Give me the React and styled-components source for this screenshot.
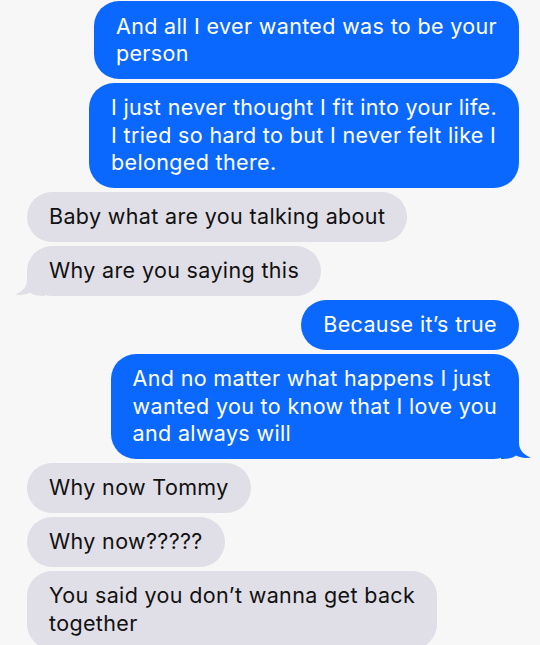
import React from 'react';
import styled, { createGlobalStyle } from 'styled-components';

const messages = [
  { out: true, lines: ['And all I ever wanted was to be your', 'person'] },
  {
    out: true,
    lines: [
      'I just never thought I fit into your life.',
      'I tried so hard to but I never felt like I',
      'belonged there.',
    ],
  },
  { out: false, lines: ['Baby what are you talking about'] },
  { out: false, tail: true, lines: ['Why are you saying this'] },
  { out: true, lines: ['Because it\u2019s true'] },
  {
    out: true,
    tail: true,
    lines: [
      'And no matter what happens I just',
      'wanted you to know that I love you',
      'and always will',
    ],
  },
  { out: false, lines: ['Why now Tommy'] },
  { out: false, lines: ['Why now?????'] },
  { out: false, lines: ['You said you don\u2019t wanna get back', 'together'] },
];

const BLUE = '#0b68ff';
const GRAY = '#e0dee6';

const GlobalStyle = createGlobalStyle`
  html, body {
    margin: 0;
    padding: 0;
    background: #f7f7f7;
    overflow: hidden;
  }
  body {
    font-family: Inter, "Noto Sans", sans-serif;
  }
`;

const Thread = styled.div`
  display: flex;
  flex-direction: column;
  gap: 3.5px;
  padding: 1px 21px 0 27px;
  width: 540px;
  height: 645px;
  box-sizing: border-box;
  overflow: hidden;
`;

const Bubble = styled.div`
  position: relative;
  align-self: ${(p) => (p.$out ? 'flex-end' : 'flex-start')};
  background: ${(p) => (p.$out ? BLUE : GRAY)};
  color: ${(p) => (p.$out ? '#ffffff' : '#111111')};
  border-radius: 25px;
  padding: 11.5px 22px;
  font-size: 21.5px;
  line-height: 27.5px;
  letter-spacing: 0.35px;
  white-space: nowrap;
`;

const Tail = styled.svg`
  position: absolute;
  bottom: 0;
  width: 30px;
  height: 30px;
  ${(p) => (p.$out ? 'right: -12px; transform: scaleX(-1);' : 'left: -12px;')}
`;

const BubbleTail = ({ out }) => (
  <Tail $out={out} viewBox="0 0 30 30">
    <path
      d="M12 3 L12 14 C12 21 7 26 0 28.5 C6 29.5 11 28.5 15 26.5 C18 29 23 30 30 30 L30 3 Z"
      fill={out ? BLUE : GRAY}
    />
  </Tail>
);

const Message = ({ msg }) => (
  <Bubble $out={msg.out}>
    {msg.lines.map((line, i) => (
      <React.Fragment key={i}>
        {i > 0 && <br />}
        {line}
      </React.Fragment>
    ))}
    {msg.tail ? <BubbleTail out={msg.out} /> : null}
  </Bubble>
);

export default function App() {
  return (
    <>
      <GlobalStyle />
      <Thread>
        {messages.map((msg, i) => (
          <Message key={i} msg={msg} />
        ))}
      </Thread>
    </>
  );
}
